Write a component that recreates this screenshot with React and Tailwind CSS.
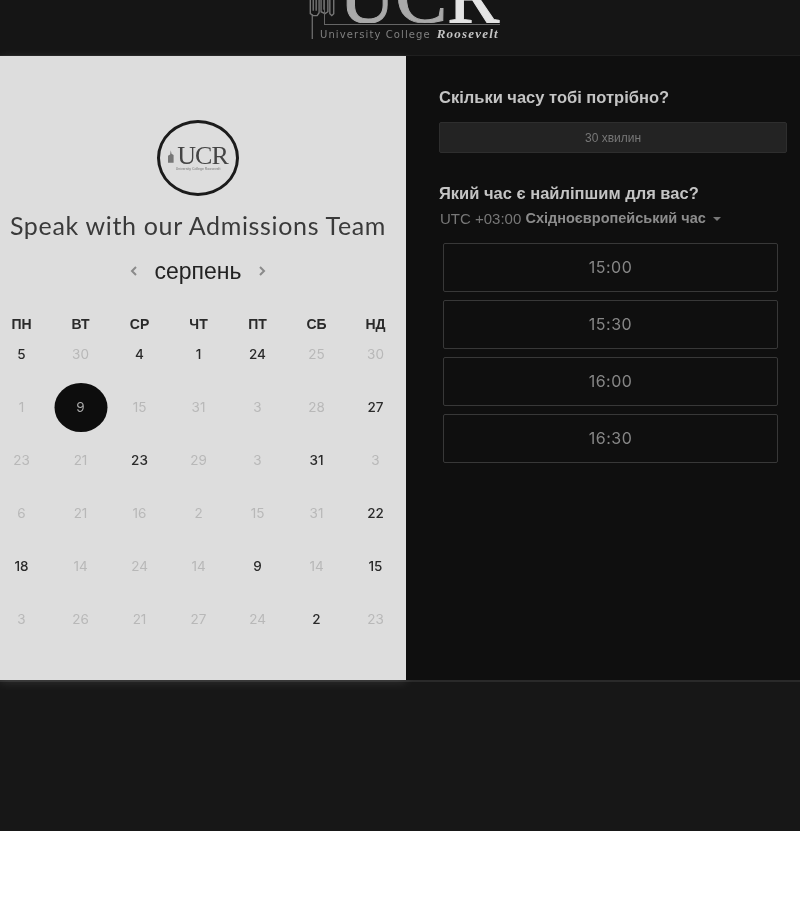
const sans = "font-['Liberation_Sans',Arial,sans-serif]";

const weekdays = ["ПН", "ВТ", "СР", "ЧТ", "ПТ", "СБ", "НД"];

// [day, active]
const days = [
  [5, 1], [30, 0], [4, 1], [1, 1], [24, 1], [25, 0], [30, 0],
  [1, 0], [9, 2], [15, 0], [31, 0], [3, 0], [28, 0], [27, 1],
  [23, 0], [21, 0], [23, 1], [29, 0], [3, 0], [31, 1], [3, 0],
  [6, 0], [21, 0], [16, 0], [2, 0], [15, 0], [31, 0], [22, 1],
  [18, 1], [14, 0], [24, 0], [14, 0], [9, 1], [14, 0], [15, 1],
  [3, 0], [26, 0], [21, 0], [27, 0], [24, 0], [2, 1], [23, 0],
];

const slots = ["15:00", "15:30", "16:00", "16:30"];

function Towers({ className }) {
  return (
    <svg viewBox="0 0 30 42" fill="none" stroke="currentColor" className={className}>
      <path d="M2 0v14l3 2h4l2-3V0M5 0v11M8 0v11M13 0v12l4 2 3-2V0M16 0v10M22 0v14l2 2 2-2V0" strokeWidth="1.4" />
      <path d="M4 15v25" strokeWidth="1.2" />
    </svg>
  );
}

function Chevron({ left }) {
  return (
    <svg viewBox="0 0 7 10" fill="none" stroke="#8a8a8a" strokeWidth="2" className="h-[10px] w-[7px]">
      <path d={left ? "M6 1L2 5l4 4" : "M1 1l4 4-4 4"} />
    </svg>
  );
}

function HeaderLogo() {
  return (
    <div className="relative mb-[14px] h-[41px] w-[200px] shrink-0 overflow-hidden">
      <Towers className="absolute left-[8px] top-0 h-[41px] w-[30px] text-[#777]" />
      <div className="absolute left-[24px] right-0 top-0 h-[25px] border-b border-l border-[#666]" />
      <div className="absolute left-[39px] right-0 top-0 flex h-[23px] items-end overflow-hidden">
        <div className="translate-y-[12px] whitespace-nowrap font-['Liberation_Serif',serif] text-[78px] leading-none">
          <span className="text-[#a9a9a9] [-webkit-text-stroke:1px_#a9a9a9]">UC</span>
          <span className="text-[#e4e4e4] [-webkit-text-stroke:1px_#e4e4e4]">R</span>
        </div>
      </div>
      <div className="absolute bottom-0 left-[20px] flex items-baseline whitespace-nowrap font-['DejaVu_Sans',sans-serif] text-[10px] leading-[12px] tracking-[1.1px] text-[#808080]">
        <span>University College</span>
        <span className="ml-[6px] font-['Liberation_Serif',serif] text-[13px] font-bold italic leading-[12px] tracking-[1.2px] text-[#c4c4c4]">
          Roosevelt
        </span>
      </div>
    </div>
  );
}

function RoundLogo() {
  return (
    <div className="flex h-[76px] w-[82px] flex-col items-center justify-center rounded-[50%] border-[3px] border-[#1b1b1b] pt-[1px]">
      <div className="flex items-center gap-[2px]">
        <svg viewBox="0 0 10 18" className="h-[17px] w-[7px] text-[#777]" fill="currentColor">
          <path d="M4 0l1 5 3 2v11H0V8l3-2z" />
        </svg>
        <span className="font-['Liberation_Serif',serif] text-[26px] leading-[20px] tracking-[-1px] text-[#444]">
          UCR
        </span>
      </div>
      <div className="mt-[1px] whitespace-nowrap font-['Liberation_Sans',sans-serif] text-[3.5px] leading-[4px] text-[#777]">
        University College Roosevelt
      </div>
    </div>
  );
}

function Calendar() {
  return (
    <div className="flex translate-x-[0.5px] flex-col items-center">
      <div className="grid h-5 w-[413px] shrink-0 grid-cols-7 items-center">
        {weekdays.map((day) => (
          <div key={day} className={`${sans} text-center text-[14px] font-bold text-[#2a2a2a]`}>
            {day}
          </div>
        ))}
      </div>
      <div className="mt-[-6.5px] grid w-[413px] shrink-0 auto-rows-[53px] grid-cols-7">
        {days.map(([day, state], i) => (
          <div key={i} className="flex items-center justify-center">
            {state === 2 ? (
              <span className="flex h-[49px] w-[53px] items-center justify-center rounded-[50%] bg-[#0d0d0d] font-['Inter',sans-serif] text-[13.5px] text-[#aaa]">
                {day}
              </span>
            ) : (
              <span
                className={
                  state === 1
                    ? "font-['Inter',sans-serif] text-[13.5px] font-medium text-[#2a2a2a]"
                    : "font-['Inter',sans-serif] text-[13.5px] text-[#b8b8b8]"
                }
              >
                {day}
              </span>
            )}
          </div>
        ))}
      </div>
    </div>
  );
}

export default function App() {
  return (
    <div className="min-h-[900px] bg-white blur-[0.7px]">
      <div className="flex h-[831px] flex-col overflow-hidden bg-[#171717]">
        <header className="flex h-[56px] shrink-0 items-end justify-center overflow-hidden border-b border-[#1f1f1f] bg-[#151515]">
          <HeaderLogo />
        </header>

        <main className="flex h-[626px] shrink-0 border-b-2 border-[#2a2a2a]">
          <section className="flex w-[406px] shrink-0 flex-col items-center bg-[#dddddd] pr-[10px] pt-[64px] shadow-[0_2px_10px_rgba(255,255,255,0.12)]">
            <RoundLogo />
            <h1 className="mt-[12px] whitespace-nowrap font-['Lato',sans-serif] text-[25px] leading-[34px] tracking-[0.67px] text-[#3a3a3a]">
              Speak with our Admissions Team
            </h1>
            <div className="mt-[14px] flex h-[30px] items-center gap-[17px]">
              <Chevron left />
              <span className={`${sans} text-[23px] text-[#222]`}>серпень</span>
              <Chevron />
            </div>
            <div className="mt-[28px]">
              <Calendar />
            </div>
          </section>

          <section className={`${sans} flex-1 bg-[#0f0f0f] pl-[33px] pr-[13px] pt-[31px]`}>
            <h2 className="text-[16.5px] font-bold leading-[20px] text-[#c4c4c4]">
              Скільки часу тобі потрібно?
            </h2>
            <div className="mt-[15px] flex h-[31px] items-center justify-center rounded-[2px] border border-[#2e2e2e] bg-[#232323] text-[12px] text-[#777]">
              30 хвилин
            </div>
            <h2 className="mt-[30px] text-[16.5px] font-bold leading-[20px] text-[#c4c4c4]">
              Який час є найліпшим для вас?
            </h2>
            <div className="mt-[6px] flex h-[20px] items-center pl-[1px] text-[15px] text-[#777]">
              UTC +03:00&nbsp;
              <span className="text-[14.5px] font-bold text-[#8c8c8c]">Східноєвропейський час</span>
              <span className="ml-[7px] h-0 w-0 border-x-[4px] border-t-[4px] border-x-transparent border-t-[#777]" />
            </div>
            <div className="ml-[4px] mr-[9px] mt-[14px] flex flex-col gap-2">
              {slots.map((slot) => (
                <div
                  key={slot}
                  className="flex h-[49px] items-center justify-center rounded-[2px] border border-[#383838] pb-[2px] font-['Inter',sans-serif] text-[16px] tracking-[0.5px] text-[#868686]"
                >
                  {slot}
                </div>
              ))}
            </div>
          </section>
        </main>
      </div>
    </div>
  );
}
